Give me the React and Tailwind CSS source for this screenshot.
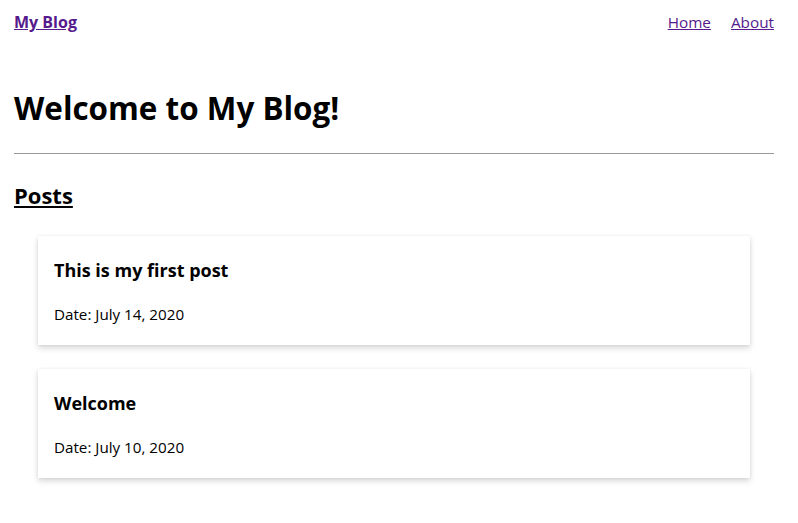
import React from 'react';

const posts = [
  { title: 'This is my first post', date: 'July 14, 2020' },
  { title: 'Welcome', date: 'July 10, 2020' },
];

const PostCard = ({ title, date }) => {
  return (
    <div className="bg-white px-4 pt-[22px] pb-[19px] shadow-[0_3px_6px_rgba(0,0,0,0.16),0_0_3px_rgba(0,0,0,0.06)]">
      <h3 className="text-[18px] leading-[24px] font-bold text-black">{title}</h3>
      <p className="mt-5 text-[15.2px] leading-[24px] text-black">Date: {date}</p>
    </div>
  );
};

export default function App() {
  return (
    <div className="min-h-screen bg-white pl-[14px] pr-[24px] font-['Open_Sans','Noto_Sans',sans-serif] text-black">
      {/* Header */}
      <nav className="flex items-center justify-between pt-[10px]">
        <a href="#" className="text-[16px] leading-[24px] font-bold text-[#551a8b] underline">
          My Blog
        </a>
        <div className="flex gap-5 text-[15.3px] leading-[24px] text-[#551a8b]">
          <a href="#" className="underline">Home</a>
          <a href="#" className="underline">About</a>
        </div>
      </nav>

      <h1 className="mt-[55px] text-[31.4px] leading-[38px] font-bold">Welcome to My Blog!</h1>

      <hr className="mt-[26px] border-t border-[#9a9a9a]" />

      <h2 className="mt-[27px] text-[22px] leading-[29px] font-bold underline">Posts</h2>

      {/* Posts */}
      <div className="mx-6 mt-[26px] flex flex-col gap-6">
        {posts.map((p) => (
          <PostCard key={p.title} title={p.title} date={p.date} />
        ))}
      </div>
    </div>
  );
}
